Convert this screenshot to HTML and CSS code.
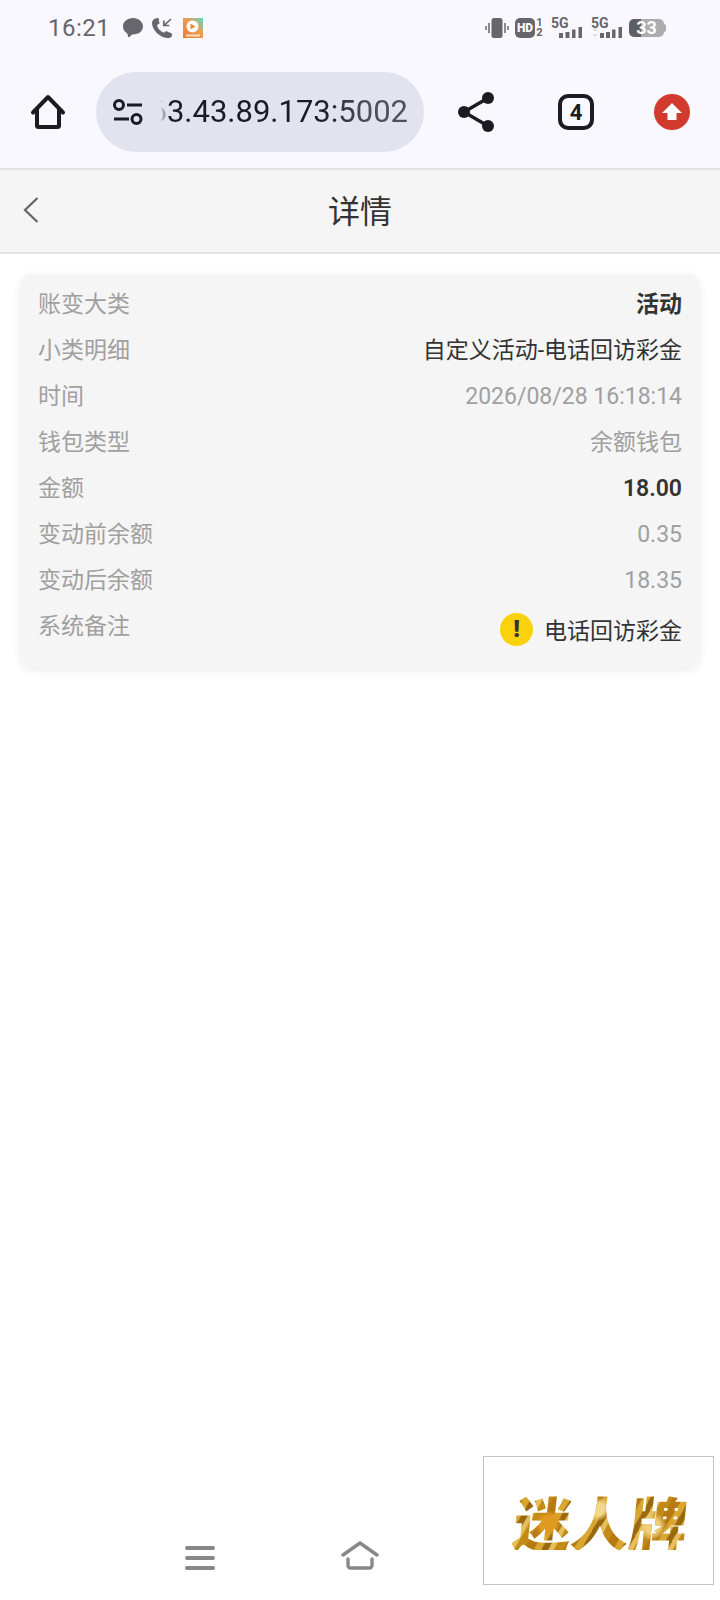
FILE: index.html
```html
<!DOCTYPE html>
<html lang="zh-CN">
<head>
<meta charset="utf-8">
<title>详情</title>
<link rel="stylesheet" href="styles.css">
</head>
<body>
<div class="page">
  <div class="chrome">
    <div class="status">
      <div class="status-left">
        <span class="clock">16:21</span>
        <svg class="si" width="22" height="22" viewBox="0 0 22 22"><path fill="#66666c" d="M11 1C5.200 1 1 4.600 1 9.500c0 3 1.600 5.400 4.200 6.900.8 1.400.9 2.600.7 3.900 1.700-.5 3-1.500 4-2.900.4.100.7.100 1.100.100 5.800 0 10-3.600 10-8S16.800 1 11 1z"/></svg>
        <svg class="si" width="22" height="22" viewBox="0 0 22 22"><path fill="#66666c" d="M5 1.200 7.500 1 8.500 6.500 6 8c.8 3.800 3.400 6.500 7 7.800l2-1.800 5.800 2.400.2 2.600c-.8 1.500-2.400 2-4 2C9 21 1 13 1 6c0-2.200 1.600-4 4-4.800z"/><path fill="none" stroke="#66666c" stroke-width="1.700" d="M20 2l-7 6.500M12.800 3.500v5h5.400"/></svg>
        <svg class="si app" width="20" height="20" viewBox="0 0 20 20"><defs><linearGradient id="ag" x1="0" y1="1" x2="1" y2="0"><stop offset="0" stop-color="#ee7a2c"/><stop offset=".55" stop-color="#ee9a50"/><stop offset="1" stop-color="#5fd8c2"/></linearGradient></defs><rect width="20" height="20" fill="url(#ag)"/><circle cx="9.500" cy="8.500" r="6" fill="#fff"/><path fill="#ee8a30" d="M7.500 5.500l5 3-5 3z"/><rect x="3" y="16.500" width="14" height="2" fill="#fde0c0"/></svg>
      </div>
      <div class="status-right">
        <svg class="vib" width="24" height="20" viewBox="0 0 24 20"><rect x="6.500" y="0" width="11" height="20" rx="2.500" fill="#66666c"/><path stroke="#66666c" stroke-width="1.500" d="M4 5v10M20 5v10M1 8v4M23 8v4"/></svg>
        <span class="hd"><span class="hd-box">HD</span><span class="hd-nums"><span>1</span><span>2</span></span></span>
        <span class="sig"><span class="sig-t">5G</span><svg width="23" height="11" viewBox="0 0 23 11"><path fill="#66666c" d="M0 6h4v5H0zM6.500 5h4v6h-4zM13 2.500h3.500V11H13zM19.500 0H23v11h-3.500z"/></svg></span>
        <span class="sig sig2"><span class="sig-t">5G</span><svg width="31" height="11" viewBox="0 0 31 11"><path fill="#d0d0d4" d="M4 1l2 2.500H2zM4 10 2 7.500h4z"/><path fill="#66666c" d="M9 6h4v5H9zM15 5h4v6h-4zM21 2.500h3.500V11H21zM27.500 0H31v11h-3.500z"/></svg></span>
        <span class="batt"><span class="batt-num">33</span></span>
      </div>
    </div>
    <div class="toolbar">
      <svg class="tool" width="36" height="36" viewBox="0 0 36 36"><path fill="none" stroke="#1c1b22" stroke-width="4" stroke-linecap="round" stroke-linejoin="round" d="M3 18.500 18 3l15 15.500M7 15v16.500a1.500 1.500 0 0 0 1.500 1.500h19a1.500 1.500 0 0 0 1.500-1.500V15"/></svg>
      <div class="pill">
        <svg class="tune" width="30" height="26" viewBox="0 0 30 26"><circle cx="6" cy="6" r="4.500" fill="none" stroke="#1c1b22" stroke-width="3"/><circle cx="23.500" cy="20" r="4.500" fill="none" stroke="#1c1b22" stroke-width="3"/><path stroke="#1c1b22" stroke-width="3" d="M14 6h15M1 20h15"/></svg>
        <div class="url"><span class="url-text">63.43.89.173:5002</span></div>
      </div>
      <svg class="tool" width="36" height="40" viewBox="0 0 36 40"><path stroke="#1c1b22" stroke-width="3.400" d="M6 20 30 6M6 20l24 14"/><circle cx="6" cy="20" r="6" fill="#1c1b22"/><circle cx="30" cy="6" r="6" fill="#1c1b22"/><circle cx="30" cy="34" r="6" fill="#1c1b22"/></svg>
      <span class="tabs">4</span>
      <svg class="tool" width="36" height="36" viewBox="0 0 36 36"><circle cx="18" cy="18" r="18" fill="#d13a2c"/><path fill="#fff" d="M18 9 28 19h-5.500v7h-9v-7H8z"/></svg>
    </div>
  </div>
  <header class="head">
    <svg class="back" width="16" height="26" viewBox="0 0 16 26"><path fill="none" stroke="#666" stroke-width="2.300" d="M14.500 1 2 13l12.500 12"/></svg>
    <h1 class="title">详情</h1>
  </header>
  <main class="content">
    <section class="card">
      <div class="row"><span class="label">账变大类</span><span class="val strong cjk">活动</span></div>
      <div class="row"><span class="label">小类明细</span><span class="val dark cjk">自定义活动-电话回访彩金</span></div>
      <div class="row"><span class="label">时间</span><span class="val">2026/08/28 16:18:14</span></div>
      <div class="row"><span class="label">钱包类型</span><span class="val cjk">余额钱包</span></div>
      <div class="row"><span class="label">金额</span><span class="val strong">18.00</span></div>
      <div class="row"><span class="label">变动前余额</span><span class="val">0.35</span></div>
      <div class="row"><span class="label">变动后余额</span><span class="val">18.35</span></div>
      <div class="row row-note"><span class="label">系统备注</span><span class="val dark note"><span class="warn">!</span>电话回访彩金</span></div>
    </section>
  </main>
  <nav class="nav">
    <svg width="30" height="24" viewBox="0 0 30 24"><path stroke="#888" stroke-width="4" stroke-linecap="round" d="M2 2h26M2 12h26M2 22h26"/></svg>
    <svg width="38" height="29" viewBox="0 0 38 29"><path fill="none" stroke="#888" stroke-width="3.400" stroke-linecap="round" stroke-linejoin="round" d="M2 14 19 2l17 12M7 18v6.500a2.500 2.500 0 0 0 2.500 2.500h19a2.500 2.500 0 0 0 2.500-2.500V18"/></svg>
  </nav>
  <div class="logo"><span class="logo-text">迷人牌</span></div>
</div>
</body>
</html>
```

FILE: styles.css
```css
* { box-sizing: border-box; }
html, body { margin: 0; padding: 0; background: #fff; }
body { font-family: Roboto, "Noto Sans CJK SC", sans-serif; }
.page { position: relative; width: 720px; height: 1600px; display: flex; flex-direction: column; overflow: hidden; }

.chrome { background: #f8f8fe; height: 170px; border-bottom: 2px solid #e2e2e8; flex: none; }
.status { height: 56px; display: flex; justify-content: space-between; align-items: center; padding: 0 56px 0 48px; }
.status-left, .status-right { display: flex; align-items: center; }
.clock { font-size: 24px; color: #65656b; letter-spacing: .5px; margin-right: 12px; }
.si { margin-right: 7px; }
.app { margin-left: 3px; }
.hd { display: flex; align-items: center; gap: 1px; margin-left: 6px; }
.hd-box { width: 20px; height: 20px; border-radius: 5px; background: #66666c; color: #f8f8fe; font-size: 12px; font-weight: 900; line-height: 20px; text-align: center; }
.hd-nums { display: flex; flex-direction: column; width: 7px; font-size: 11px; line-height: 10px; font-weight: 700; color: #66666c; text-align: center; }
.sig { position: relative; display: flex; align-items: flex-end; justify-content: flex-end; width: 31px; height: 20px; margin-left: 8px; }
.sig-t { position: absolute; left: 0; top: -1px; font-size: 14px; line-height: 13px; font-weight: 700; color: #66666c; }
.sig2 { margin-left: 9px; }
.batt { position: relative; width: 35px; height: 18px; margin-left: 7px; border-radius: 5px; background: linear-gradient(90deg, #5e5e64 0 35%, #acacb0 35% 100%); display: flex; align-items: center; justify-content: center; }
.batt::after { content: ""; position: absolute; right: -2px; top: 5px; width: 2px; height: 8px; border-radius: 0 2px 2px 0; background: #acacb0; }
.batt-num { color: #fff; font-size: 18px; font-weight: 700; line-height: 18px; }
.toolbar { height: 112px; display: flex; align-items: center; padding: 0 30px; }
.tool { flex: none; }
.pill { width: 328px; height: 80px; margin: 0 34px 0 30px; border-radius: 40px; background: #e2e3ef; display: flex; align-items: center; padding: 0 16px 0 17px; flex: none; }
.tune { flex: none; }
.url { position: relative; flex: 1; overflow: hidden; display: flex; justify-content: flex-end; margin-left: 8px; height: 40px; }
.url::before { content: ""; position: absolute; left: 0; top: 0; bottom: 0; width: 17px; background: linear-gradient(90deg, #e2e3ef 55%, rgba(226,227,239,.55) 85%, rgba(226,227,239,0)); }
.url-text { font-size: 31px; line-height: 40px; white-space: nowrap; color: transparent; background: linear-gradient(90deg, #1c1b22 65%, #50505a 85%); -webkit-background-clip: text; background-clip: text; }
.tabs { width: 36px; height: 36px; border: 4px solid #1c1b22; border-radius: 10px; margin: 0 60px 0 64px; font-size: 22px; font-weight: 700; color: #1c1b22; display: flex; align-items: center; justify-content: center; flex: none; }

.head { height: 84px; padding-top: 2px; background: #f5f5f5; border-bottom: 2px solid #e4e4e4; position: relative; display: flex; align-items: center; justify-content: center; flex: none; }
.back { position: absolute; left: 23px; top: 27px; }
.title { margin: 0; font-size: 32px; font-weight: 400; color: #333; line-height: 1; }

.content { padding: 20px; flex: 1; }
.card { background: #f5f5f5; border-radius: 12px; box-shadow: 0 2px 8px rgba(0,0,0,.08); padding: 7px 18px 15px; }
.row { height: 46px; display: flex; justify-content: space-between; align-items: center; font-size: 23px; }
.label { color: #a0a0a0; margin-bottom: 4px; }
.val { color: #a0a0a0; }
.cjk { margin-bottom: 4px; }
.dark { color: #333; }
.strong { color: #333; font-weight: 600; }
.row-note { height: 50px; align-items: flex-start; padding-top: 4px; }
.note { display: flex; align-items: center; margin-top: 5px; }
.warn { width: 33px; height: 33px; border-radius: 50%; background: #f9d20d; color: #333; font-weight: 900; font-size: 24px; line-height: 33px; text-align: center; margin-right: 11px; }

.nav { flex: none; height: 60px; padding: 0 0 30px 185px; display: flex; align-items: flex-end; gap: 126px; }

.logo { position: absolute; left: 483px; top: 1456px; width: 231px; height: 129px; padding-left: 5px; background: #fff; border: 1px solid #c4c4c4; display: flex; align-items: center; justify-content: center; }
.logo-text { display: inline-block; transform: skewX(-6deg); font-family: "Noto Sans CJK SC", sans-serif; font-weight: 900; font-size: 58px; line-height: 1; color: transparent; background: radial-gradient(circle at 20% 55%, #e09a20 0 8px, transparent 14px), radial-gradient(circle at 48% 30%, #f2d888 0 6px, transparent 12px), radial-gradient(circle at 80% 60%, #f0cf7a 0 7px, transparent 14px), repeating-linear-gradient(115deg, #b67a10 0 9px, #d9a632 9px 16px, #9a680e 16px 22px, #e6bf5c 22px 27px, #c48a18 27px 36px); -webkit-background-clip: text; background-clip: text; }
```
